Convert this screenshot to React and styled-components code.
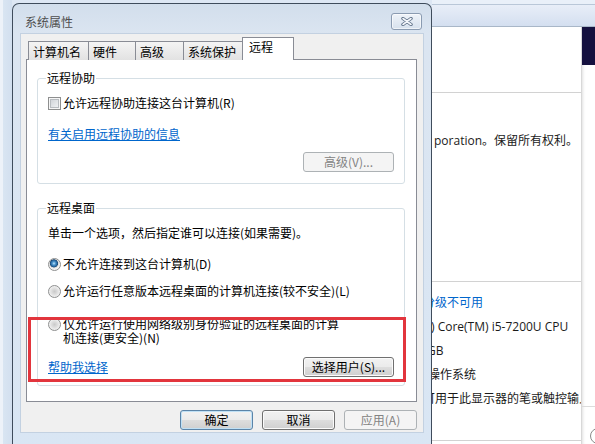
import { styled, createGlobalStyle } from "styled-components";

const GlobalStyle = createGlobalStyle`
  html, body {
    margin: 0;
    padding: 0;
    overflow: hidden;
    background: #dce7f4;
  }
  body {
    font-family: "Noto Sans CJK SC", "Liberation Sans", sans-serif;
    font-size: 12px;
    color: #000;
  }
`;

const App = () => {
  return (
    <>
      <GlobalStyle />
      <Desktop>
        <LeftEdge />
        <Dialog>
          <TitleBar>
            <Title>系统属性</Title>
            <CloseButton aria-label="关闭">
              <svg width="12" height="9" viewBox="0 0 12 9">
                <path d="M2 1.5 L10 7.5 M10 1.5 L2 7.5" stroke="#5d6f86" strokeWidth="3.4" strokeLinecap="round" />
                <path d="M2 1.5 L10 7.5 M10 1.5 L2 7.5" stroke="#f4f7fb" strokeWidth="1.6" strokeLinecap="round" />
              </svg>
            </CloseButton>
          </TitleBar>
          <Client>
            <TabStrip>
              <Tab $w={61}>计算机名</Tab>
              <Tab $w={48}>硬件</Tab>
              <Tab $w={49}>高级</Tab>
              <Tab $w={60}>系统保护</Tab>
              <Tab $w={52} $active>远程</Tab>
            </TabStrip>
            <Panel>
              <Group>
                <Legend>远程协助</Legend>
                <OptionRow $mt={10}>
                  <Checkbox />
                  <span>允许远程协助连接这台计算机(R)</span>
                </OptionRow>
                <OptionRow $mt={15}>
                  <Link>有关启用远程协助的信息</Link>
                </OptionRow>
                <ActionRow $mt={10}>
                  <Button $w={91} disabled>高级(V)...</Button>
                </ActionRow>
              </Group>
              <Group $mt={17} $pb={8}>
                <Legend>远程桌面</Legend>
                <OptionRow $mt={10}>
                  <span>单击一个选项，然后指定谁可以连接(如果需要)。</span>
                </OptionRow>
                <OptionRow $mt={15}>
                  <Radio $checked />
                  <span>不允许连接到这台计算机(D)</span>
                </OptionRow>
                <OptionRow $mt={11}>
                  <Radio />
                  <span>允许运行任意版本远程桌面的计算机连接(较不安全)(L)</span>
                </OptionRow>
                <OptionRow $mt={18} $top>
                  <Radio />
                  <TwoLine>
                    仅允许运行使用网络级别身份验证的远程桌面的计算
                    <br />
                    机连接(更安全)(N)
                  </TwoLine>
                </OptionRow>
                <ActionRow $mt={12} $between>
                  <Link>帮助我选择</Link>
                  <Button $w={91}>选择用户(S)...</Button>
                </ActionRow>
              </Group>
              <Highlight />
            </Panel>
            <ButtonRow>
              <Button $default>确定</Button>
              <Button>取消</Button>
              <Button disabled>应用(A)</Button>
            </ButtonRow>
          </Client>
        </Dialog>
        <BackWindow>
          <BackTitle />
          <BackBody>
            <BackMain>
              <Divider $mt={65} />
              <InfoLine $mt={38} $h={20} $shift={2}>poration。保留所有权利。</InfoLine>
              <Divider $mt={130} />
              <InfoLine $mt={9} $shift={-9} $blue>分级不可用</InfoLine>
              <InfoLine $shift={-1}>) Core(TM) i5-7200U CPU</InfoLine>
              <InfoLine $shift={-5}>GB</InfoLine>
              <InfoLine $shift={-4}>操作系统</InfoLine>
              <InfoLine $shift={-9}>可用于此显示器的笔或触控输入</InfoLine>
              <Divider $mt={29} />
            </BackMain>
            <BackSide>
              <NavyBlock />
              <SideRule />
              <SideIcon width="14" height="16" viewBox="0 0 14 16">
                <circle cx="16" cy="8" r="7.5" fill="none" stroke="#8a8a8a" strokeWidth="1" />
              </SideIcon>
            </BackSide>
          </BackBody>
        </BackWindow>
      </Desktop>
    </>
  );
};

const Desktop = styled.div`
  display: grid;
  grid-template-columns: 12px 420px 1fr;
  width: 595px;
  height: 444px;
  overflow: hidden;
  background: #dde7f4;
`;

const LeftEdge = styled.div`
  background: linear-gradient(
    to right,
    #edf2f9 0,
    #edf2f9 3px,
    #d9e5f2 3px,
    #d2dfef 12px
  );
`;

const Dialog = styled.div`
  margin-top: 3px;
  height: 460px;
  box-sizing: border-box;
  border: 1px solid #3f4c5c;
  border-bottom: none;
  border-radius: 7px 7px 0 0;
  background: linear-gradient(to bottom, #d2deec 0, #dbe5f1 30px, #d9e6f4 100%);
  display: flex;
  flex-direction: column;
`;

const TitleBar = styled.div`
  height: 29px;
  box-sizing: border-box;
  padding: 5px 9px 0 12px;
  display: flex;
  align-items: center;
  justify-content: space-between;
`;

const Title = styled.span`
  font-size: 12px;
  color: #4e4e4e;
`;

const CloseButton = styled.div`
  width: 31px;
  height: 17px;
  box-sizing: border-box;
  border: 1px solid #8a9bb1;
  border-radius: 3px;
  background: linear-gradient(to bottom, #eef3f9, #d7e1ed);
  box-shadow: inset 0 0 0 1px rgba(255, 255, 255, 0.6);
  display: flex;
  align-items: center;
  justify-content: center;
`;

const Client = styled.div`
  margin: 0 7px;
  height: 400px;
  box-sizing: border-box;
  border: 1px solid #c3d1e1;
  background: #f0f0f0;
  padding: 3px 6px 0 5px;
  display: flex;
  flex-direction: column;
`;

const TabStrip = styled.div`
  display: flex;
  align-items: flex-end;
  height: 23px;
  margin-left: 2px;
  margin-bottom: -1px;
  position: relative;
  z-index: 1;
`;

const Tab = styled.div`
  width: ${(p) => p.$w}px;
  height: ${(p) => (p.$active ? 23 : 19)}px;
  box-sizing: border-box;
  margin-right: -1px;
  padding-left: ${(p) => (p.$active ? 6 : 4)}px;
  border: 1px solid #898c95;
  border-bottom: none;
  background: ${(p) =>
    p.$active ? "#ffffff" : "linear-gradient(to bottom, #f4f4f4, #e2e2e2)"};
  font-size: 12px;
  line-height: ${(p) => (p.$active ? 18 : 19)}px;
  white-space: nowrap;
`;

const Panel = styled.div`
  position: relative;
  height: 343px;
  box-sizing: border-box;
  border: 1px solid #898c95;
  background: #fff;
  padding: 11px 11px 0 10px;
`;

const Group = styled.fieldset`
  margin: ${(p) => p.$mt || 0}px 0 0 0;
  padding: 0 10px ${(p) => (p.$pb === undefined ? 11 : p.$pb)}px 10px;
  border: 1px solid #d5dfe5;
  border-radius: 3px;
  min-width: 0;
`;

const Legend = styled.legend`
  margin-left: -2px;
  padding: 0 1px;
  font-size: 12px;
  line-height: 14px;
`;

const OptionRow = styled.div`
  margin-top: ${(p) => p.$mt || 0}px;
  display: flex;
  align-items: ${(p) => (p.$top ? "flex-start" : "center")};
  gap: 2px;
  min-height: 16px;
  line-height: 16px;
  white-space: nowrap;
`;

const TwoLine = styled.span`
  line-height: 14px;
`;

const ActionRow = styled.div`
  margin-top: ${(p) => p.$mt || 0}px;
  display: flex;
  align-items: center;
  justify-content: ${(p) => (p.$between ? "space-between" : "flex-end")};
`;

const Checkbox = styled.span`
  width: 13px;
  height: 13px;
  box-sizing: border-box;
  border: 1px solid #8e8f8f;
  background: linear-gradient(135deg, #c9cdd2 0%, #eef0f2 80%, #f8f8f8 100%);
  box-shadow: inset 0 0 0 1px #f6f6f6, inset 0 0 0 2px #b8bcc0;
  flex-shrink: 0;
`;

const Radio = styled.span`
  width: 13px;
  height: 13px;
  margin-top: 1px;
  box-sizing: border-box;
  border-radius: 50%;
  border: 1px solid #8e8f8f;
  flex-shrink: 0;
  background: ${(p) =>
    p.$checked
      ? "radial-gradient(circle at 45% 40%, #c4e8fd 0, #4d97cf 1.6px, #2a6aa3 3px, #1d4c78 3.8px, #d9d9d9 4.3px, #f4f4f4 5.5px)"
      : "radial-gradient(circle at 50% 50%, #c9c9c9 0, #dedede 3px, #f1f1f1 5.5px)"};
`;

const Link = styled.span`
  color: #0066cc;
  text-decoration: underline;
  line-height: 16px;
`;

const Button = styled.button`
  width: ${(p) => p.$w || 73}px;
  height: 20px;
  box-sizing: border-box;
  padding: 0;
  font-family: "Noto Sans CJK SC", "Liberation Sans", sans-serif;
  font-size: 12px;
  line-height: 18px;
  color: #000;
  border: 1px solid ${(p) => (p.$default ? "#5b84a8" : "#707070")};
  border-radius: 3px;
  background: linear-gradient(
    to bottom,
    #f2f2f2 0%,
    #ebebeb 48%,
    #dddddd 52%,
    #cfcfcf 100%
  );
  box-shadow: inset 0 0 0 1px ${(p) => (p.$default ? "#bfe0f5" : "#fbfbfb")};

  &:disabled {
    border-color: #adb2b5;
    background: #f4f4f4;
    color: #838383;
    box-shadow: none;
  }
`;

const Highlight = styled.div`
  position: absolute;
  left: 1px;
  top: 257px;
  width: 378px;
  height: 65px;
  box-sizing: border-box;
  border: 3px solid #e2353d;
  pointer-events: none;
`;

const ButtonRow = styled.div`
  margin-top: 8px;
  display: flex;
  justify-content: flex-end;
  gap: 9px;
`;

const BackWindow = styled.div`
  display: flex;
  flex-direction: column;
  height: 444px;
`;

const BackTitle = styled.div`
  height: 29px;
  box-sizing: border-box;
  border-bottom: 1px solid #a9b7c8;
  background: linear-gradient(
    to bottom,
    #e9f0f9 0,
    #e9f0f9 4px,
    #b9c7d8 4px,
    #b9c7d8 5px,
    #e8eef8 5px,
    #d4dff0 100%
  );
`;

const BackBody = styled.div`
  flex: 1;
  display: flex;
  background: #fff;
`;

const BackMain = styled.div`
  width: 149px;
  overflow: hidden;
  display: flex;
  flex-direction: column;
`;

const Divider = styled.div`
  margin-top: ${(p) => p.$mt || 0}px;
  height: 1px;
  background: #d2d2d2;
  flex-shrink: 0;
`;

const InfoLine = styled.div`
  margin-top: ${(p) => p.$mt || 0}px;
  margin-left: ${(p) => p.$shift || 0}px;
  height: ${(p) => p.$h || 24}px;
  line-height: ${(p) => p.$h || 24}px;
  white-space: nowrap;
  font-family: "Open Sans", "Noto Sans CJK SC", sans-serif;
  font-size: 12px;
  color: ${(p) => (p.$blue ? "#0066cc" : "#1a1a1a")};
  flex-shrink: 0;
`;

const BackSide = styled.div`
  flex: 1;
  display: flex;
  flex-direction: column;
  border-left: 1px solid #d8d8d8;
  box-shadow: inset 3px 0 3px -2px rgba(0, 0, 0, 0.12);
  overflow: hidden;
`;

const NavyBlock = styled.div`
  height: 38px;
  background: #15113f;
`;

const SideRule = styled.div`
  margin-top: 341px;
  height: 1px;
  background: #dcdcdc;
`;

const SideIcon = styled.svg`
  margin-top: 21px;
  flex-shrink: 0;
`;

export default App;
